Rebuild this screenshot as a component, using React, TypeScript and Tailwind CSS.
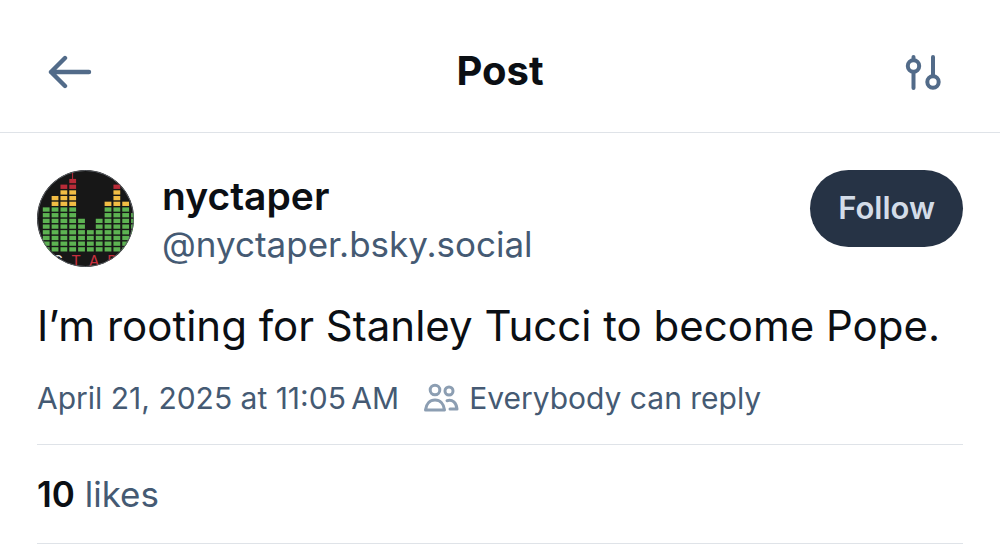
import type { ReactNode } from "react";

interface Level {
  green: number;
  yellow: number;
  red: number;
}

const levels: Level[] = [
  { green: 8, yellow: 0, red: 0 },
  { green: 8, yellow: 2, red: 0 },
  { green: 8, yellow: 3, red: 1 },
  { green: 8, yellow: 3, red: 2 },
  { green: 6, yellow: 0, red: 0 },
  { green: 4, yellow: 0, red: 0 },
  { green: 6, yellow: 0, red: 0 },
  { green: 8, yellow: 1, red: 0 },
  { green: 8, yellow: 3, red: 1 },
  { green: 8, yellow: 1, red: 0 },
  { green: 7, yellow: 0, red: 0 },
];

function cellColor(level: Level, row: number) {
  if (row < level.green) return "#5db352";
  if (row < level.green + level.yellow) return "#f2bd45";
  return "#b92b38";
}

function Avatar() {
  return (
    <svg
      viewBox="0 0 97 97"
      className="h-[97px] w-[97px] shrink-0 rounded-full bg-[#171717]"
      role="img"
      aria-label="nyctaper avatar"
    >
      {levels.map((level, col) =>
        Array.from({ length: level.green + level.yellow + level.red }, (_, row) => (
          <rect
            key={`${col}-${row}`}
            x={5.8 + col * 8.83}
            y={77.2 - row * 5.69}
            width={6.8}
            height={4.3}
            fill={cellColor(level, row)}
          />
        )),
      )}
      <path d="M35.6 2v7" stroke="#b92b38" strokeWidth="1" />
      <g fontFamily="Liberation Mono, monospace" fontSize="16" textAnchor="middle">
        <text x="21" y="96" fill="#e8e8e8">C</text>
        <text x="39" y="96" fill="#c62f3d">T</text>
        <text x="57" y="96" fill="#c62f3d">A</text>
        <text x="75" y="96" fill="#c62f3d">P</text>
      </g>
      <circle cx="48.5" cy="48.5" r="48" fill="none" stroke="#5c6066" strokeWidth="1" />
    </svg>
  );
}

function BackIcon() {
  return (
    <svg viewBox="0 0 44 36" className="h-9 w-11" fill="none" aria-hidden="true">
      <path
        d="M17 4 3 18l14 14M3 18h38"
        stroke="#526b89"
        strokeWidth="4.4"
        strokeLinecap="round"
        strokeLinejoin="round"
      />
    </svg>
  );
}

function SettingsIcon() {
  return (
    <svg
      viewBox="0 0 40 36"
      className="h-9 w-10"
      fill="none"
      stroke="#526b89"
      strokeWidth="4"
      strokeLinecap="round"
      aria-hidden="true"
    >
      <circle cx="9.5" cy="12" r="5.7" />
      <path d="M9.500 3v3M9.500 18v16M29 3v19" />
      <circle cx="29" cy="28" r="5.7" />
    </svg>
  );
}

function PeopleIcon() {
  return (
    <svg
      viewBox="0 0 36 30"
      className="h-[30px] w-9 shrink-0"
      fill="none"
      stroke="#8c9eb2"
      strokeWidth="3"
      strokeLinecap="round"
      strokeLinejoin="round"
      aria-hidden="true"
    >
      <circle cx="12" cy="7" r="4.800" />
      <circle cx="26" cy="8" r="4" />
      <path d="M2.500 27c.6-6 4.300-10 9.500-10s8.900 4 9.500 10z" />
      <path d="M24 17.700c5.500-1.500 9.500 2 10 8.300h-7" />
    </svg>
  );
}

function IconButton({ label, children }: { label: string; children: ReactNode }) {
  return (
    <button type="button" aria-label={label} className="flex h-11 w-12 items-center justify-start">
      {children}
    </button>
  );
}

export default function App() {
  return (
    <div className="bg-white font-['Inter',sans-serif] text-[#0b0f14]">
      <header className="flex items-center justify-between border-b border-[#dfe3e8] px-12 pt-[50px] pb-[38px]">
        <IconButton label="Back">
          <BackIcon />
        </IconButton>
        <h1 className="pb-0.5 text-[40px] leading-10 font-bold">Post</h1>
        <IconButton label="Thread settings">
          <SettingsIcon />
        </IconButton>
      </header>

      <main className="px-[37px]">
        <article>
          <div className="flex items-start pt-[37px]">
            <Avatar />
            <div className="ml-7 min-w-0 flex-1">
              <h2 className="pt-0.5 text-[39px] leading-12 font-semibold">nyctaper</h2>
              <p className="text-[35px] leading-12 text-[#455a73]">@nyctaper.bsky.social</p>
            </div>
            <button
              type="button"
              className="h-[77px] shrink-0 rounded-full bg-[#263345] px-7 text-[31px] font-semibold text-[#d3dce8]"
            >
              Follow
            </button>
          </div>

          <p className="pt-[30px] text-[42px] leading-[56px]">
            I’m rooting for Stanley Tucci to become Pope.
          </p>

          <div className="flex items-center pt-6 pb-[26px] text-[30px] leading-10 text-[#455a73]">
            <time dateTime="2025-04-21T11:05">{"April 21, 2025 at 11:05\u202fAM"}</time>
            <button type="button" className="ml-6 flex items-center gap-2.5">
              <PeopleIcon />
              Everybody can reply
            </button>
          </div>
        </article>

        <div className="border-y border-[#dfe3e8] py-[25px] text-[35px] leading-12">
          <a href="#likes" className="text-[#455a73]">
            <span className="font-semibold text-[#0b0f14]">10</span> likes
          </a>
        </div>
      </main>
    </div>
  );
}
